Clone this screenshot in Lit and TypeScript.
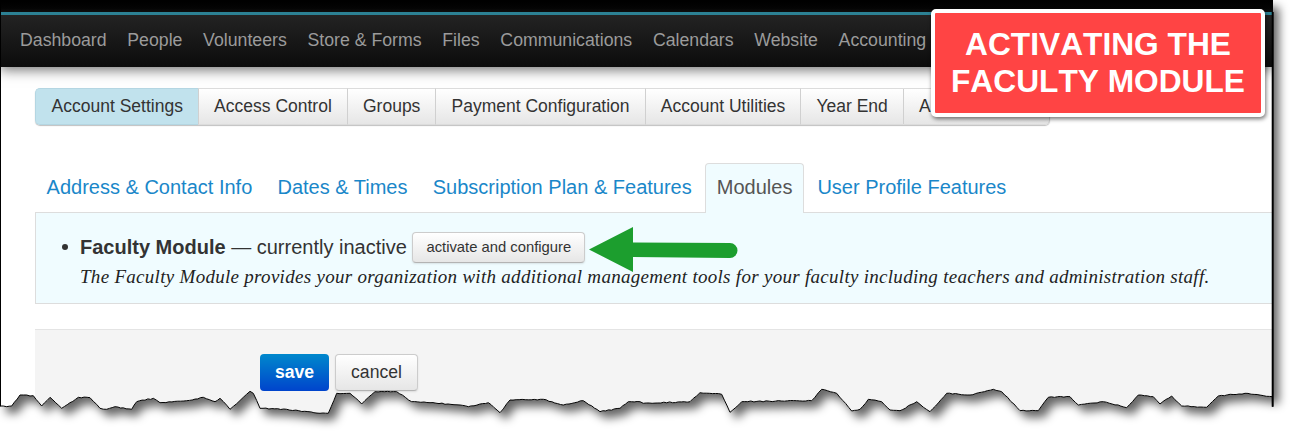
import { LitElement, html, css, svg } from "lit";
import { customElement } from "lit/decorators.js";

const a5 = [[0,288],[20,290],[35,288],[60,255],[100,257],[125,288],[150,262],[185,295],[235,262],[270,263],[300,295],[320,298],[345,290],[395,298],[410,275],[460,265],[480,278],[560,272],[610,262],[645,275],[660,265],[690,298],[730,262],[750,244],[760,250],[780,295],[860,298],[960,310],[985,310],[1010,250],[1050,250],[1085,282],[1125,245],[1190,245],[1235,275]].map(([x,y])=>[x/3,310+y/3]);
const a6 = [[0,128],[90,135],[115,140],[175,128],[210,158],[240,120],[340,118],[400,135],[460,122],[510,155],[570,145],[595,125],[630,125],[640,130],[780,125],[810,98],[875,103],[900,157],[935,125],[1100,122],[1145,122],[1175,88],[1220,100],[1265,153]].map(([x,y])=>[430+x/3,360+y/3]);
const a7 = [[0,388],[25,358],[65,365],[90,390],[120,392],[170,365],[210,395],[260,340],[330,345],[400,328],[425,335],[480,392],[535,392],[565,352],[630,350],[655,375],[730,365],[800,383],[835,345],[880,350],[900,372],[935,348],[965,378],[1040,382],[1075,348],[1155,340],[1237,350]].map(([x,y])=>[860+x/3,280+y/3]);
const anchors = [...a5, ...a6, ...a7];

function tornEdge(): number[][] {
  const out: number[][] = [];
  for (let i = 0; i < anchors.length - 1; i++) {
    const [x0, y0] = anchors[i];
    const [x1, y1] = anchors[i + 1];
    const n = Math.max(1, Math.round((x1 - x0) / 3));
    for (let k = 0; k < n; k++) {
      const t = k / n;
      const x = x0 + (x1 - x0) * t;
      const h = Math.sin(x * 12.9898) * 43758.5453;
      const noise = (h - Math.floor(h) - 0.5) * 1.0;
      out.push([+x.toFixed(1), +(y0 + (y1 - y0) * t + (k ? noise : 0)).toFixed(1)]);
    }
  }
  out.push(anchors[anchors.length - 1]);
  return out;
}

const edge = tornEdge();
const edgeStr = edge.map((p) => p.join(",")).join(" ");
const lastY = edge[edge.length - 1][1];
const paperPoly = `0,0 1273,0 1273,${lastY} ${[...edge].reverse().map((p) => p.join(",")).join(" ")} 0,${edge[0][1]}`;
const clip = `polygon(0px 0px, 1273px 0px, 1273px ${lastY}px, ${[...edge].reverse().map((p) => `${p[0]}px ${p[1]}px`).join(", ")})`;

@customElement("app-root")
export class AppRoot extends LitElement {
  static styles = css`
    :host { display: block; position: relative; width: 1298px; height: 446px; overflow: hidden; background: #fff; font-family: "Liberation Sans", Arial, sans-serif; color: #333; }
    .layer { position: absolute; left: 0; top: 0; width: 1298px; height: 446px; pointer-events: none; }
    .paper { position: relative; width: 1273px; height: 446px; background: #fff; overflow: hidden; }
    .top { height: 12px; background: linear-gradient(#000, #050505 70%, #111); }
    .nav { border-top: 3px solid #2c8194; background: linear-gradient(#232323, #0c0c0c); display: flex; align-items: center; gap: 20.7px; padding: 0 0 2px 20px; height: 50px; font-size: 17.72px; color: #9b9b9b; box-shadow: 0 3px 12px rgba(0,0,0,.55); white-space: nowrap; }
    .subnav { display: flex; width: max-content; margin: 21px 0 0 35px; height: 37px; border-radius: 5px; box-shadow: 0 1px 1px rgba(0,0,0,.25); font-size: 17.5px; }
    .subnav span { display: flex; align-items: center; padding: 0 15.1px; border: 1px solid #dcdcdc; border-left-color: #d0d0d0; border-width: 1px 0 1px 1px; background: linear-gradient(#fff, #e6e6e6); }
    .subnav span:last-child { border-right: 1px solid #ccc; border-radius: 0 5px 5px 0; width: 115px; }
    .subnav span.on { background: #c1e2ed; border-color: #b4d6e2; border-radius: 5px 0 0 5px; padding-left: 15.6px; }
    .tabs { display: flex; margin: 38px 0 0 34px; height: 49px; font-size: 20px; align-items: stretch; position: relative; z-index: 1; }
    .tabs a { display: flex; align-items: center; padding: 0 11.6px 2px; color: #1a87c9; border: 1px solid transparent; border-bottom: 0; }
    .tabs a.on { color: #555; background: #f0fcff; border-color: #ddd; border-radius: 4px 4px 0 0; margin: 0 .9px -1px 1px; padding: 0 10.5px 2px; }
    .panel { margin: 0 0 0 35px; height: 92px; box-sizing: border-box; border: 1px solid #ddd; border-right: 0; background: #f0fcff; padding: 18px 0 0 29px; position: relative; font-size: 20px; }
    .bullet { position: absolute; left: 26px; top: 31px; width: 6px; height: 6px; border-radius: 50%; background: #333; }
    .line { display: flex; align-items: center; margin-left: 15px; height: 32px; white-space: pre; }
    .line b { font-weight: 700; }
    .btn { display: inline-flex; align-items: center; justify-content: center; box-sizing: border-box; border: 1px solid #ccc; border-bottom-color: #b3b3b3; border-radius: 4px; background: linear-gradient(#fff, #e6e6e6); box-shadow: 0 1px 2px rgba(0,0,0,.1); color: #333; }
    .small { width: 173px; height: 31px; font-size: 14.8px; }
    .desc { margin: 3px 0 0 15px; font: italic 19px "Liberation Serif", serif; letter-spacing: .29px; white-space: nowrap; color: #222; }
    .footer { margin: 25px 0 0 35px; height: 130px; box-sizing: border-box; background: #f4f4f4; border-top: 1px solid #e4e4e4; padding: 24px 0 0 225px; display: flex; gap: 6px; align-items: flex-start; font-size: 17.6px; }
    .save { width: 69px; height: 37px; border-radius: 4px; display: flex; align-items: center; justify-content: center; color: #fff; font-weight: 700; background: linear-gradient(#0088cc, #0044cc); }
    .cancel { width: 83px; height: 37px; }
    .callout { position: absolute; left: 931px; top: 9px; width: 334px; height: 108px; box-sizing: border-box; border: 4px solid #fff; border-radius: 5px; background: #ff4444; box-shadow: 1px 2px 4px rgba(0,0,0,.55); color: #fff; font-weight: 700; font-size: 31.7px; font-kerning: none; line-height: 37px; text-align: center; padding-top: 13px; white-space: nowrap; }
  `;

  render() {
    return html`
      <svg class="layer" viewBox="0 0 1298 446">
        <defs><filter id="b" x="-5%" y="-5%" width="110%" height="115%"><feGaussianBlur stdDeviation="5"></feGaussianBlur></filter></defs>
        <polygon points=${paperPoly} transform="translate(6,7)" fill="#000" fill-opacity=".6" filter="url(#b)"></polygon>
      </svg>
      <div class="paper" style="clip-path:${clip}">
        <div class="top"></div>
        <div class="nav">
          ${["Dashboard","People","Volunteers","Store & Forms","Files","Communications","Calendars","Website","Accounting"].map((n) => html`<span>${n}</span>`)}
        </div>
        <div class="subnav">
          <span class="on">Account Settings</span><span>Access Control</span><span>Groups</span><span>Payment Configuration</span><span>Account Utilities</span><span>Year End</span><span>A</span>
        </div>
        <div class="tabs">
          <a>Address &amp; Contact Info</a><a>Dates &amp; Times</a><a>Subscription Plan &amp; Features</a><a class="on">Modules</a><a>User Profile Features</a>
        </div>
        <div class="panel">
          <i class="bullet"></i>
          <div class="line"><b>Faculty Module</b> — currently inactive <span class="btn small">activate and configure</span></div>
          <div class="desc">The Faculty Module provides your organization with additional management tools for your faculty including teachers and administration staff.</div>
        </div>
        <div class="footer">
          <span class="save">save</span><span class="btn cancel">cancel</span>
        </div>
      </div>
      <svg class="layer" viewBox="0 0 1298 446">
        ${svg`<polyline points="0.5,0 0.5,${edge[0][1]} ${edgeStr} 1272.5,${lastY + 10}" fill="none" stroke="#000" stroke-width="1"></polyline>
        <line x1="1272.7" y1="12" x2="1272.7" y2="${lastY + 10}" stroke="#000" stroke-width="2"></line>
        <path d="M589 249.5 L633 227 L633 242.5 L730 243 A7.5 7.5 0 0 1 730 258 L633 257 L633 272 Z" fill="#1c9e2e"></path>`}
      </svg>
      <div class="callout">ACTIVATING THE<br />FACULTY MODULE</div>
    `;
  }
}
